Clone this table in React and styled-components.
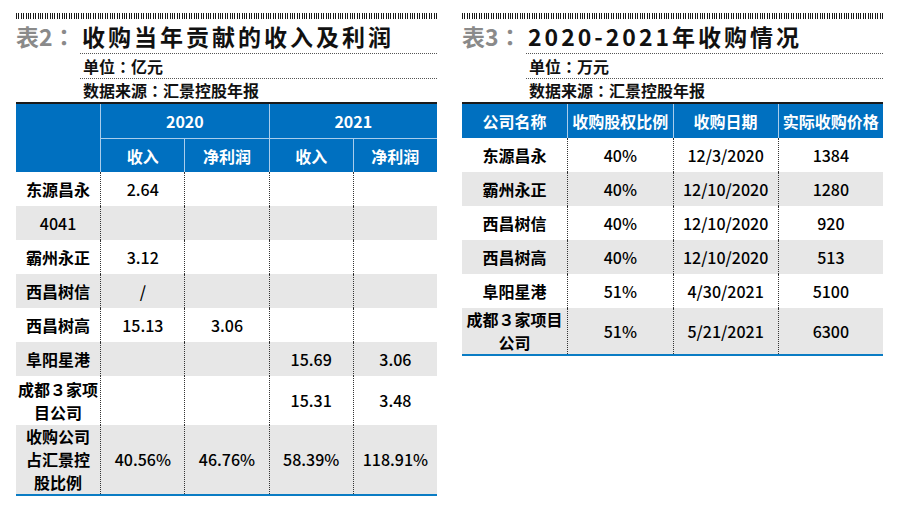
import React from 'react';
import styled, { createGlobalStyle } from 'styled-components';

const Global = createGlobalStyle`
  html, body { margin: 0; padding: 0; background: #fff; }
  body { font-family: "Noto Sans CJK SC", "Noto Sans", sans-serif; color: #1a1a1a; }
`;

const Page = styled.div`
  width: 900px;
  height: 511px;
  box-sizing: border-box;
  padding: 13px 17px 0 16px;
  display: flex;
  gap: 25px;
`;

const Panel = styled.section`
  width: 421px;
  display: flex;
  flex-direction: column;
`;

const Barcode = styled.div`
  height: 6px;
  background: repeating-linear-gradient(90deg, #1a1a1a 0 1px, #fff 1px 2.4px);
`;

const TitleRow = styled.h2`
  margin: 0;
  height: 34px;
  display: flex;
  align-items: center;
  font-size: 23px;
  font-weight: 700;
  line-height: 34px;
`;

const TitleTag = styled.span`
  flex: none;
  width: 68px;
  color: #8a8a8a;
`;

const Colon = styled.span`
  font-family: "Noto Sans CJK TC", "Noto Sans CJK SC", sans-serif;
`;

const TitleText = styled.span`
  color: #111;
  letter-spacing: 3px;
  white-space: nowrap;
  margin-left: -2px;
`;

const Meta = styled.div`
  margin-left: 64px;
`;

const MetaLine = styled.div`
  border-top: 1px dotted #555;
  height: ${p => p.$h}px;
  line-height: ${p => p.$h}px;
  padding-left: 3px;
  font-size: 16px;
  font-weight: 700;
  color: #111;
`;

const Table = styled.table`
  width: 100%;
  table-layout: fixed;
  border-collapse: separate;
  border-spacing: 0;
  border-top: 2px solid #1a1a1a;
  border-bottom: 2px solid #0a7cc4;
  font-size: 16px;
`;

const Row = styled.tr`
  height: ${p => p.$h || 34}px;
  background: ${p => (p.$shade ? '#e7e7e7' : '#fff')};
`;

const Th = styled.th`
  padding: 0;
  background: #0070c0;
  color: #fff;
  font-weight: 700;
  text-align: center;
  vertical-align: middle;
  white-space: nowrap;
  border-left: ${p => (p.$divide ? '1px solid #a9cdec' : 'none')};
  border-top: ${p => (p.$top ? '1px solid #a9cdec' : 'none')};
`;

const Td = styled.td`
  padding: 0;
  text-align: center;
  vertical-align: middle;
  line-height: 23px;
  font-weight: ${p => (p.$label ? 700 : 500)};
  color: #000;
  border-left: ${p => (p.$divide ? '1px dotted #333' : 'none')};
`;

const Lines = ({ text }) =>
  Array.isArray(text)
    ? text.map((t, i) => (
        <React.Fragment key={i}>
          {i > 0 && <br />}
          {t}
        </React.Fragment>
      ))
    : text;

const leftRows = [
  { label: '东源昌永', v: ['2.64', '', '', ''] },
  { label: '4041', plain: true, v: ['', '', '', ''] },
  { label: '霸州永正', v: ['3.12', '', '', ''] },
  { label: '西昌树信', v: ['/', '', '', ''] },
  { label: '西昌树高', v: ['15.13', '3.06', '', ''] },
  { label: '阜阳星港', v: ['', '', '15.69', '3.06'] },
  { label: ['成都３家项', '目公司'], v: ['', '', '15.31', '3.48'], h: 49 },
  { label: ['收购公司', '占汇景控', '股比例'], v: ['40.56%', '46.76%', '58.39%', '118.91%'], h: 69 },
];

const rightRows = [
  { label: '东源昌永', v: ['40%', '12/3/2020', '1384'] },
  { label: '霸州永正', v: ['40%', '12/10/2020', '1280'] },
  { label: '西昌树信', v: ['40%', '12/10/2020', '920'] },
  { label: '西昌树高', v: ['40%', '12/10/2020', '513'] },
  { label: '阜阳星港', v: ['51%', '4/30/2021', '5100'] },
  { label: ['成都３家项目', '公司'], v: ['51%', '5/21/2021', '6300'], h: 46 },
];

const Header = ({ tag, title, unit }) => (
  <>
    <Barcode />
    <TitleRow>
      <TitleTag>
        {tag}
        <Colon>：</Colon>
      </TitleTag>
      <TitleText>{title}</TitleText>
    </TitleRow>
    <Meta>
      <MetaLine $h={24}>
        单位<Colon>：</Colon>
        {unit}
      </MetaLine>
      <MetaLine $h={23}>
        数据来源<Colon>：</Colon>汇景控股年报
      </MetaLine>
    </Meta>
  </>
);

const BodyRows = ({ rows }) =>
  rows.map((r, i) => (
    <Row key={i} $shade={i % 2 === 1} $h={r.h}>
      <Td $label={!r.plain}>
        <Lines text={r.label} />
      </Td>
      {r.v.map((c, j) => (
        <Td key={j} $divide>
          {c}
        </Td>
      ))}
    </Row>
  ));

export default function App() {
  return (
    <>
      <Global />
      <Page>
        <Panel>
          <Header tag="表2" title="收购当年贡献的收入及利润" unit="亿元" />
          <Table>
            <thead>
              <Row>
                <Th rowSpan={2} />
                <Th colSpan={2} $divide>2020</Th>
                <Th colSpan={2} $divide>2021</Th>
              </Row>
              <Row>
                <Th $divide $top>收入</Th>
                <Th $divide $top>净利润</Th>
                <Th $divide $top>收入</Th>
                <Th $divide $top>净利润</Th>
              </Row>
            </thead>
            <tbody>
              <BodyRows rows={leftRows} />
            </tbody>
          </Table>
        </Panel>
        <Panel>
          <Header tag="表3" title="2020-2021年收购情况" unit="万元" />
          <Table>
            <thead>
              <Row>
                <Th>公司名称</Th>
                <Th $divide>收购股权比例</Th>
                <Th $divide>收购日期</Th>
                <Th $divide>实际收购价格</Th>
              </Row>
            </thead>
            <tbody>
              <BodyRows rows={rightRows} />
            </tbody>
          </Table>
        </Panel>
      </Page>
    </>
  );
}
